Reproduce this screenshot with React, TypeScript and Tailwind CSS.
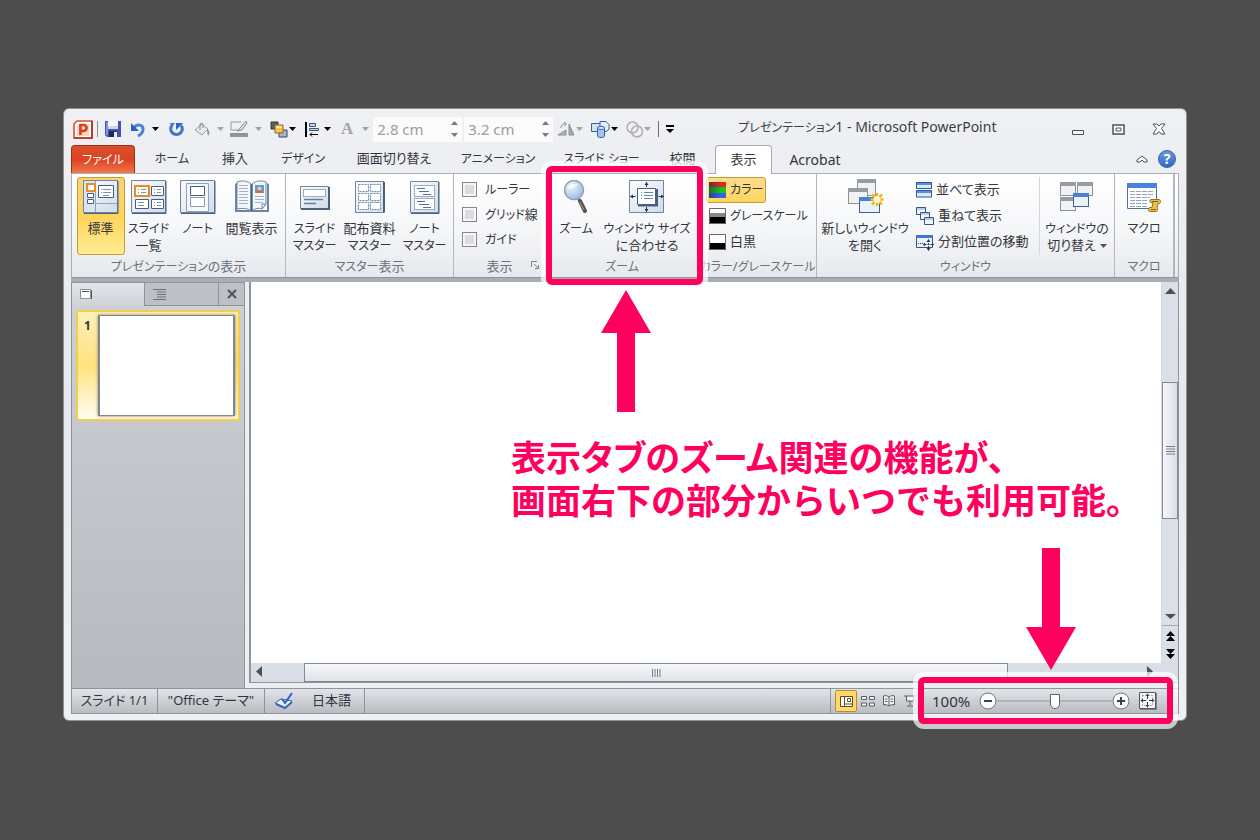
import type { ReactNode } from 'react'

const FONT = "font-['Noto_Sans','Noto_Sans_CJK_JP',sans-serif] [font-feature-settings:'palt']"

// katakana runs are set one step smaller than the kanji around them
function Text({ children }: { children: string }) {
  return (
    <span>
      {children.split(/([ァ-ヶー]+)/).map((part, i) =>
        i % 2 ? <span key={i} className="text-[12px]">{part}</span> : part,
      )}
    </span>
  )
}

function Caret({ className = '' }: { className?: string }) {
  return (
    <svg width="7" height="4" viewBox="0 0 7 4" fill="currentColor" className={className}>
      <path d="M0 0h7L3.5 4z" />
    </svg>
  )
}

/* ---------- quick access toolbar icons ---------- */

function PowerPointLogo() {
  return (
    <svg width="20" height="19" viewBox="0 0 20 19">
      <path d="M4 1h15v17H1V4z" fill="#fff" stroke="#d9532c" strokeWidth="1.6" />
      <path d="M4 6l2-2h10v12H4z" fill="#f8d3c4" />
      <path d="M19 1v17H1" fill="none" stroke="#b92d12" strokeWidth="1.6" />
      <path d="M7.4 15V5h3.2a2.9 2.9 0 0 1 0 6H7.6" fill="none" stroke="#d6401b" strokeWidth="2.6" />
    </svg>
  )
}

function SaveIcon() {
  return (
    <svg width="16" height="16" viewBox="0 0 16 16">
      <path d="M0 0h16v16H2l-2-2z" fill="#4a50b4" />
      <path d="M1 1h2v13H1z" fill="#8b90dd" />
      <path d="M3 0h10v8H3z" fill="#f3f6fc" />
      <path d="M3 5h10v3H3z" fill="#c7d7ee" />
      <path d="M4 10h8v6H4z" fill="#23265c" />
      <path d="M9 11h3v5H9z" fill="#e9edf6" />
    </svg>
  )
}

function UndoIcon() {
  return (
    <svg width="15" height="15" viewBox="0 0 15 15">
      <path d="M3 5.500c3-4 9.500-3 9 2-.2 3-2 5-5 6.500" fill="none" stroke="#4a80d6" strokeWidth="3" />
      <path d="M0 1v8h8z" fill="#2f63c0" />
    </svg>
  )
}

function RepeatIcon() {
  return (
    <svg width="15" height="15" viewBox="0 0 15 15">
      <path d="M3 3.500c-3 4 0 9 4.500 9s7.500-5 4.500-9" fill="none" stroke="#3f78d0" strokeWidth="3" />
      <path d="M7 1h7L7 8z" fill="#2f63c0" />
      <path d="M1 1h5L3 5z" fill="#3f78d0" />
    </svg>
  )
}

function FillIcon() {
  return (
    <svg width="17" height="15" viewBox="0 0 17 15">
      <path d="M1 8l7-6 6 5-6 6z" fill="#e7e8ea" stroke="#9a9c9f" />
      <path d="M6 8V2a2 2 0 0 1 3 0v4" fill="none" stroke="#8d8f92" />
      <path d="M13 6c2 2 3 5 2 7s-2-1-2-7z" fill="#939598" />
    </svg>
  )
}

function OutlineIcon() {
  return (
    <svg width="18" height="18" viewBox="0 0 18 18">
      <path d="M11 2H1v8h7" fill="none" stroke="#96989b" />
      <path d="M16 1l-6 7-3 3 5-1 5-7z" fill="#d9dadc" stroke="#8d8f92" />
      <path d="M0 13h18v4H0z" fill="#919396" />
    </svg>
  )
}

function ArrangeIcon() {
  return (
    <svg width="18" height="17" viewBox="0 0 18 17">
      <path d="M1 1h7v7H1z" fill="#5b5e63" stroke="#32353a" />
      <path d="M9 9h8v7H9z" fill="#a4b6cd" stroke="#3a4658" />
      <path d="M5 4h8v8H5z" fill="#f4c34e" stroke="#8b6d2b" />
      <path d="M6 5h6v2H6z" fill="#fbe29b" />
    </svg>
  )
}

function AlignIcon() {
  return (
    <svg width="15" height="15" viewBox="0 0 15 15">
      <path d="M1 0v15" stroke="#000" strokeWidth="2" />
      <path d="M4.500 1.500h6v3h-6zM4.500 6.500h9v2h-9z" fill="#c5d3e4" stroke="#3b5878" />
      <path d="M5 12.500h8M7 10.500l-2 2 2 2" fill="none" stroke="#000" />
    </svg>
  )
}

function RotateIcon() {
  return (
    <svg width="19" height="16" viewBox="0 0 19 16">
      <path d="M1 14l8-5v5z" fill="#b3b5b8" stroke="#8d8f92" />
      <path d="M12 3v11h5z" fill="#a5a7aa" stroke="#8d8f92" />
      <path d="M4 7c0-3 2-5 5-4M7 1l2.500 2L7 5" fill="none" stroke="#8d8f92" />
    </svg>
  )
}

function ShapesIcon() {
  return (
    <svg width="19" height="18" viewBox="0 0 19 18">
      <path d="M.5 3.500h10v8H.5z" fill="#cfe2f7" stroke="#2f65a6" />
      <path d="M9 1.500h6l3 3v5l-3 2H9z" fill="#e3eefa" stroke="#2f65a6" />
      <path d="M6.500 8c0-2 7-2 7 0v8c0 2-7 2-7 0z" fill="#a5c6ec" stroke="#2f65a6" />
      <ellipse cx="10" cy="8" rx="3.500" ry="1.500" fill="#eef5fc" stroke="#2f65a6" />
    </svg>
  )
}

function CirclesIcon() {
  return (
    <svg width="18" height="17" viewBox="0 0 18 17" fill="none" stroke="#b0aeb2" strokeWidth="1.500">
      <circle cx="6.500" cy="6.500" r="5.500" />
      <circle cx="11" cy="10.500" r="5.500" />
    </svg>
  )
}

/* ---------- large ribbon icons ---------- */

const EDGE = '#71859f'
const DARK = '#48607e'

function Sheet({ children }: { children: ReactNode }) {
  return (
    <svg width="36" height="34" viewBox="0 0 36 34">
      <defs>
        <linearGradient id="sheet" x1="0" y1="0" x2="1" y2="1">
          <stop offset="0" stopColor="#fafcfe" />
          <stop offset="1" stopColor="#cfdce9" />
        </linearGradient>
      </defs>
      {children}
    </svg>
  )
}

function NormalIcon() {
  return (
    <Sheet>
      <path d="M.5 .5h34v32H.5z" fill="url(#sheet)" stroke={EDGE} />
      <path d="M1 1h11v31H1z" fill="#dbe5f0" />
      <path d="M12.500 1v31M13 23.500h21" stroke="#8fa4bd" />
      <path d="M4 4h8v7H4z" fill="#fff" stroke="#ee8a22" strokeWidth="2" />
      <path d="M4.500 13.500h6v4h-6zM4.500 19.500h6v4h-6z" fill="#fff" stroke={DARK} />
      <path d="M15.500 5.500h15v12h-15z" fill="#fff" stroke={DARK} />
      <path d="M18 9.500h1M18 12.500h1M20 9.500h8M20 12.500h8M20 15.500h6" stroke="#7d93ad" />
      <path d="M35 1v32.500H1" fill="none" stroke={DARK} />
    </Sheet>
  )
}

function SorterIcon() {
  return (
    <Sheet>
      <path d="M.5 .5h34v32H.5z" fill="url(#sheet)" stroke={EDGE} />
      <path d="M20.500 6.500h12v9h-12zM4.500 19.500h13v9h-13zM20.500 19.500h12v9h-12z" fill="#fff" stroke={DARK} />
      <path d="M4 6h14v10H4z" fill="#fff" stroke="#ee8a22" strokeWidth="2" />
      <path d="M7 9.500h1M7 12.500h1M10 9.500h5M10 12.500h5M23 9.500h1M23 12.500h1M26 9.500h4M26 12.500h4M7 22.500h6M7 25.500h6M23 22.500h1M23 25.500h1M26 22.500h4M26 25.500h4" stroke="#7d93ad" />
      <path d="M35 1v32.500H1" fill="none" stroke={DARK} />
    </Sheet>
  )
}

function NotesIcon() {
  return (
    <Sheet>
      <path d="M.5 .5h34v32H.5z" fill="url(#sheet)" stroke={EDGE} />
      <path d="M6.500 3.500h22v28h-22z" fill="#f6f9fc" stroke="#90a2b8" />
      <path d="M10.500 6.500h14v9h-14z" fill="#fff" stroke={DARK} />
      <path d="M10.500 17.500h14v9h-14z" fill="#fff" stroke="#2b3f5b" strokeDasharray="1 1" />
      <path d="M35 1v32.500H1" fill="none" stroke={DARK} />
    </Sheet>
  )
}

function ReadingIcon() {
  return (
    <Sheet>
      <path d="M1 4l2-1v27h30V3l2 1v28H1z" fill="#6f86a3" />
      <path d="M3 2c5-2 11-1 14 2v27c-3-3-9-3-14-2z" fill="#f3f6fa" stroke={EDGE} />
      <path d="M32 2c-5-2-11-1-14 2v27c3-3 7-3 10-2l4-5z" fill="#f3f6fa" stroke={EDGE} />
      <path d="M17.500 4v27" stroke={DARK} strokeWidth="2" />
      <path d="M5 5.500h9M5 8.500h9M5 11.500h9M5 14.500h9M5 17.500h9M5 20.500h9M5 23.500h9M21 16.500h9M21 19.500h9M21 22.500h8" stroke="#a3b3c6" />
      <path d="M21 5h9v8h-9z" fill="#5a9fd8" />
      <path d="M22 13c0-4 7-4 7 0z" fill="#d8643a" />
      <circle cx="25.500" cy="8.500" r="2" fill="#f6c9a4" />
      <path d="M28 29v-5h4z" fill="#fff" stroke={EDGE} />
    </Sheet>
  )
}

function SlideMasterIcon() {
  return (
    <Sheet>
      <path d="M3.500 6.500h28v22h-28z" fill="url(#sheet)" stroke={EDGE} />
      <path d="M32 7v22H4" fill="none" stroke={DARK} strokeWidth="2" />
      <path d="M6.500 9.500h22v7h-22z" fill="#fff" stroke={DARK} strokeDasharray="1 1" />
      <path d="M7 19.500h19M7 23.500h12" stroke="#5f80a8" strokeWidth="1.500" />
    </Sheet>
  )
}

function HandoutMasterIcon() {
  return (
    <Sheet>
      <path d="M3.500 1.500h28v31h-28z" fill="url(#sheet)" stroke={EDGE} />
      <path d="M32 2v30.500" stroke={DARK} strokeWidth="2" />
      {[4, 13, 22].map((y) => (
        <g key={y} fill="#fff" stroke="#7189a6" strokeDasharray="2 1">
          <rect x="6.500" y={y + 0.5} width="10" height="7" />
          <rect x="18.500" y={y + 0.5} width="10" height="7" />
        </g>
      ))}
    </Sheet>
  )
}

function NotesMasterIcon() {
  return (
    <Sheet>
      <path d="M3.500 1.500h28v31h-28z" fill="url(#sheet)" stroke={EDGE} />
      <path d="M7.500 5.500h20v11h-20zM7.500 18.500h20v11h-20z" fill="#fff" stroke={DARK} strokeDasharray="1 1" />
      <path d="M10 8.500h8M12 11.500h10M16 14.500h8M10 21.500h8M12 24.500h10M16 27.500h8" stroke="#4f709a" />
      <path d="M32 2v31.500H4" fill="none" stroke={DARK} />
    </Sheet>
  )
}

function MagnifierIcon() {
  return (
    <svg width="36" height="34" viewBox="0 0 36 34">
      <defs>
        <radialGradient id="lens" cx="0.35" cy="0.3" r="0.8">
          <stop offset="0" stopColor="#f3f9ff" />
          <stop offset="1" stopColor="#8db7e4" />
        </radialGradient>
      </defs>
      <path d="M19 17l3 4" stroke="#84898f" strokeWidth="3" />
      <path d="M22 21l5 10" stroke="#57504f" strokeWidth="4" strokeLinecap="round" />
      <path d="M22 22l4 8" stroke="#a39c99" strokeWidth="1" />
      <circle cx="16" cy="10" r="9.500" fill="url(#lens)" stroke="#98a1ac" strokeWidth="1.500" />
      <path d="M10 8c2-4 7-5 10-3-3 1-6 5-10 3z" fill="#fff" opacity="0.7" />
    </svg>
  )
}

function FitIcon() {
  return (
    <Sheet>
      <path d="M.5 .5h34v32H.5z" fill="url(#sheet)" stroke={EDGE} />
      <path d="M8.500 8.500h18v16h-18z" fill="#fff" stroke={DARK} />
      <path d="M28 9v16.500H9" fill="none" stroke={DARK} strokeWidth="2" />
      <path d="M12 12.500h1M12 15.500h1M12 18.500h1M15 12.500h9M15 15.500h9M15 18.500h9" stroke="#6484ad" />
      <path d="M17.500 2v5M17.500 27v5M1.500 16.500h5M29.500 16.500h5" stroke="#26384f" />
      <path d="M15.500 5l2-3 2 3zM15.500 29l2 3 2-3zM4 14.500l-3 2 3 2zM32 14.500l3 2-3 2z" fill="#26384f" />
    </Sheet>
  )
}

function MiniWindow({ x, y, w, h, active }: { x: number; y: number; w: number; h: number; active?: boolean }) {
  return (
    <g>
      <rect x={x + 0.5} y={y + 0.5} width={w} height={h} fill={active ? '#eaf1fa' : '#f1f2f4'} stroke={active ? '#3b5f96' : '#8c9097'} />
      <rect x={x} y={y} width={w + 1} height="4" fill={active ? '#4a7fd6' : '#979ba2'} />
    </g>
  )
}

function NewWindowIcon() {
  return (
    <svg width="38" height="36" viewBox="0 0 38 36">
      <MiniWindow x={11} y={0} w={18} h={16} />
      <MiniWindow x={2} y={9} w={19} h={15} />
      <MiniWindow x={13} y={18} w={20} h={15} active />
      <path d="M31 14v13M24.500 20.500h13M26 15.500l10 10M36 15.500l-10 10" stroke="#f2b51f" strokeWidth="2.500" />
      <circle cx="31" cy="20.500" r="3.500" fill="#fffbd0" />
    </svg>
  )
}

function SwitchWindowIcon() {
  return (
    <svg width="36" height="32" viewBox="0 0 36 32">
      <MiniWindow x={1} y={1} w={15} h={13} />
      <MiniWindow x={18} y={1} w={15} h={13} />
      <MiniWindow x={1} y={16} w={15} h={13} />
      <MiniWindow x={14} y={12} w={15} h={13} active />
    </svg>
  )
}

function MacroIcon() {
  return (
    <svg width="34" height="32" viewBox="0 0 34 32">
      <path d="M.5 2.500h29v25H.5z" fill="#fff" stroke="#4f7099" />
      <path d="M0 2h30v5H0z" fill="#4a80de" />
      <path d="M3 10.500h24M3 13.500h24M3 16.500h20M3 19.500h18M3 22.500h18M3 25.500h18" stroke="#8fa5c2" strokeDasharray="5 1" />
      <path d="M24 18.500h8c2 0 2 4 0 4h-1l-1 4c1 0 1 4-1 4h-6c-2 0-2-4 0-4h2l1-5h-2c-1.500 0-1.500-3 0-3z" fill="#eac04a" stroke="#99701c" />
      <path d="M25 20.500h6M24 28.500h5" stroke="#8a6418" />
    </svg>
  )
}

/* ---------- ribbon pieces ---------- */

function BigButton({ icon, lines, active, caret, className = '' }: { icon: ReactNode; lines: string[]; active?: boolean; caret?: boolean; className?: string }) {
  return (
    <button
      type="button"
      className={`flex h-[78px] shrink-0 flex-col items-center rounded-[3px] border pt-px ${
        active ? 'border-[#c69a37] bg-linear-to-b from-[#fbd374] via-[#ffd457] to-[#ffec92]' : 'border-transparent'
      } ${className}`}
    >
      <span className="flex h-9 items-center justify-center">{icon}</span>
      <span className="mt-[5px] flex flex-col text-[13px] leading-[17px] whitespace-nowrap">
        {lines.map((line, i) => (
          <span key={line} className="flex items-center justify-center gap-1">
            <Text>{line}</Text>
            {caret && i === lines.length - 1 && <Caret className="text-[#555]" />}
          </span>
        ))}
      </span>
    </button>
  )
}

function SmallButton({ icon, label, active }: { icon: ReactNode; label: string; active?: boolean }) {
  return (
    <button
      type="button"
      className={`flex h-[26px] w-fit items-center gap-1 rounded-[3px] border px-[2px] text-[13px] whitespace-nowrap ${
        active ? 'border-[#c69a37] bg-linear-to-b from-[#fcdc8c] to-[#ffd55c]' : 'border-transparent'
      }`}
    >
      {icon}
      <Text>{label}</Text>
    </button>
  )
}

function Group({ title, width, children, last, launcher }: { title: string; width: string; children: ReactNode; last?: boolean; launcher?: boolean }) {
  return (
    <section className={`relative flex shrink-0 flex-col border-r border-[#b3b7bd] ${last ? 'border-r-2' : ''} ${width}`}>
      <div className="flex h-[82px] items-start justify-center pt-[3px]">{children}</div>
      <h2 className="flex-1 text-center text-[13px] leading-[20px] whitespace-nowrap text-[#6b7079]"><Text>{title}</Text></h2>
      {launcher && (
        <svg width="8" height="8" viewBox="0 0 8 8" className="absolute right-[6px] bottom-2" fill="none" stroke="#83878d">
          <path d="M.5 6V.5H6M3 3l4 4M7.500 4v3.500H4" />
        </svg>
      )}
    </section>
  )
}

function Frame({ className }: { className: string }) {
  return <div className={`pointer-events-none absolute z-20 rounded-md border-[6px] border-[#ff005e] ring-[5px] ring-white/70 ${className}`} />
}

function Arrow({ className }: { className: string }) {
  return (
    <svg width="50" height="122" viewBox="0 0 50 122" fill="#ff005e" className={`absolute z-20 ${className}`}>
      <path d="M25 0l25 43H34v79H16V43H0z" />
    </svg>
  )
}

const tabs = [
  { label: 'ホーム', width: 'w-[74px]' },
  { label: '挿入', width: 'w-[52px]' },
  { label: 'デザイン', width: 'w-[84px]' },
  { label: '画面切り替え', width: 'w-[98px]' },
  { label: 'アニメーション', width: 'w-[110px]' },
  { label: 'スライド ショー', width: 'w-[97px]' },
  { label: '校閲', width: 'w-[65px]' },
]

function SizeBox({ label, value }: { label: string; value: string }) {
  return (
    <div className="flex h-[25px] w-[89px] items-center bg-[#fbfbfc] px-1">
      <input aria-label={label} defaultValue={value} className="w-0 flex-1 bg-transparent text-[15px] text-[#9b9da0] outline-none" />
      <svg width="7" height="16" viewBox="0 0 7 16" fill="#777a7e">
        <path d="M0 4h7L3.500 0zM0 12h7l-3.500 4z" />
      </svg>
    </div>
  )
}

function TitleBar() {
  return (
    <header className="flex h-8 items-center pl-[2px] text-black">
      <PowerPointLogo />
      <div className="mr-[7px] ml-1 h-4 w-px bg-[#8c9096]" />
      <button type="button" aria-label="保存"><SaveIcon /></button>
      <button type="button" aria-label="元に戻す" className="ml-[10px] flex items-center gap-[6px]"><UndoIcon /><Caret /></button>
      <button type="button" aria-label="繰り返し" className="ml-[10px]"><RepeatIcon /></button>
      <button type="button" aria-label="塗りつぶし" className="ml-[10px] flex items-center gap-[6px] text-[#a1a3a6]"><FillIcon /><Caret /></button>
      <button type="button" aria-label="枠線" className="ml-[6px] flex items-center gap-[7px] text-[#a1a3a6]"><OutlineIcon /><Caret /></button>
      <button type="button" aria-label="配置" className="ml-2 flex items-center gap-px"><ArrangeIcon /><Caret /></button>
      <button type="button" aria-label="配置揃え" className="ml-[9px] flex items-center gap-1"><AlignIcon /><Caret /></button>
      <button type="button" aria-label="文字" className="ml-[10px] flex items-center gap-[9px] font-['Liberation_Serif',serif] text-[17px] font-bold text-[#a1a3a6]">A<Caret /></button>
      <div className="ml-1 flex gap-[2px]">
        <SizeBox label="高さ" value="2.8 cm" />
        <SizeBox label="幅" value="3.2 cm" />
      </div>
      <button type="button" aria-label="回転" className="ml-1 flex items-center text-[#a1a3a6]"><RotateIcon /><Caret /></button>
      <button type="button" aria-label="図形" className="ml-2 flex items-center gap-px"><ShapesIcon /><Caret /></button>
      <button type="button" aria-label="結合" className="ml-2 flex items-center text-[#a1a3a6]"><CirclesIcon /><Caret /></button>
      <div className="mx-[7px] h-4 w-px bg-[#6c7076]" />
      <svg width="8" height="8" viewBox="0 0 8 8"><path d="M0 0h8v2H0zM0 4h8L4 8z" /></svg>
      <h1 className="mb-[6px] ml-16 flex-1 text-[14px] whitespace-nowrap text-[#3b3e44]"><Text>プレゼンテーション1  -  Microsoft PowerPoint</Text></h1>
      <div className="flex items-center gap-[27px] pr-[13px]">
        <button type="button" aria-label="最小化"><svg width="13" height="14" viewBox="0 0 13 14"><path d="M.5 8.500h11v4H.5z" fill="#fff" stroke="#4b5058" /></svg></button>
        <button type="button" aria-label="元のサイズに戻す">
          <svg width="13" height="11" viewBox="0 0 13 11"><path d="M1 1h11v9H1z" fill="#fff" stroke="#4b5058" strokeWidth="1.500" /><path d="M4 4h5v3H4z" fill="none" stroke="#4b5058" /></svg>
        </button>
        <button type="button" aria-label="閉じる">
          <svg width="14" height="12" viewBox="0 0 14 12"><path d="M1 1h4l2 2 2-2h4L9.500 5.500 13 11H9L7 8.500 5 11H1l3.500-5.500z" fill="#fff" stroke="#4b5058" /></svg>
        </button>
      </div>
    </header>
  )
}

function TabBar() {
  return (
    <nav className="flex h-7 items-end text-[13px] text-[#33363b]">
      <button type="button" className="h-7 w-16 rounded-t-[4px] border border-b-0 border-[#a92c0e] bg-linear-to-b from-[#d9512c] via-[#dc4122] to-[#f0764a] text-white"><Text>ファイル</Text></button>
      {tabs.map((t) => (
        <button type="button" key={t.label} className={`h-7 shrink-0 whitespace-nowrap ${t.width}`}><Text>{t.label}</Text></button>
      ))}
      <button type="button" className="relative z-10 -mb-px h-[29px] w-[57px] rounded-t-[4px] border border-b-0 border-[#a5aab2] bg-white">表示</button>
      <button type="button" className="h-7 w-[86px] text-[14px]">Acrobat</button>
      <div className="ml-auto flex h-7 items-center gap-[10px] pr-[3px]">
        <button type="button" aria-label="リボンの最小化">
          <svg width="12" height="8" viewBox="0 0 12 8"><path d="M1 5l5-4 5 4v2H8L6 5 4 7H1z" fill="#fff" stroke="#4b5058" /></svg>
        </button>
        <button type="button" aria-label="ヘルプ" className="h-[18px] w-[18px] rounded-full border border-[#2f5fae] bg-linear-to-b from-[#6c9ae0] to-[#3469bf] text-[14px] leading-[16px] font-bold text-white">?</button>
      </div>
    </nav>
  )
}

function ToneIcon({ mid, low }: { mid: string; low: string }) {
  return (
    <svg width="17" height="16" viewBox="0 0 17 16">
      <path d="M0 0h17v16H0z" fill="#fff" />
      <path d="M0 5h17v5H0z" fill={mid} />
      <path d="M0 9h17v7H0z" fill={low} />
      <path d="M.5 .5h16v15H.5z" fill="none" stroke="#65686d" />
    </svg>
  )
}

function ColorIcon() {
  return (
    <svg width="17" height="16" viewBox="0 0 17 16">
      <defs>
        <linearGradient id="shade">
          <stop offset="0" stopColor="#1d3344" stopOpacity="0.6" />
          <stop offset="0.7" stopColor="#1d3344" stopOpacity="0" />
        </linearGradient>
      </defs>
      <path d="M0 0h17v5H0z" fill="#d92a20" />
      <path d="M0 5h17v6H0z" fill="#18c41e" />
      <path d="M0 11h17v5H0z" fill="#2f66f0" />
      <path d="M0 0h17v16H0z" fill="url(#shade)" />
    </svg>
  )
}

function StackIcon() {
  return (
    <svg width="16" height="16" viewBox="0 0 16 16">
      <path d="M.5 .5h15v6H.5zM.5 8.500h15v6.500H.5z" fill="#dfeafa" stroke="#2f5596" />
      <path d="M1 1h14v2H1zM1 9h14v2H1z" fill="#5b8ee6" />
    </svg>
  )
}

function CascadeIcon() {
  return (
    <svg width="18" height="18" viewBox="0 0 18 18" fill="#f3f7fd" stroke="#3c5478">
      <path d="M.5 .5h9v7h-9z" />
      <path d="M4.500 5.500h9v7h-9z" />
      <path d="M8.500 10.500h9v7h-9z" />
      <path d="M1 2h8M5 7h8M9 12h8" stroke="#7ba3e6" strokeWidth="1" />
    </svg>
  )
}

function SplitIcon() {
  return (
    <svg width="18" height="17" viewBox="0 0 18 17">
      <path d="M.5 1.500h16v12H.5z" fill="#eaf1fb" stroke="#3c5478" />
      <path d="M0 1h17v3H0z" fill="#3f76d6" />
      <path d="M2 9.500h6" stroke="#26384f" strokeDasharray="1 1" />
      <path d="M12.500 6v10M8.500 10.500h9" stroke="#26384f" strokeDasharray="2 1" />
      <path d="M10.500 8l2-3 2 3zM10.500 14l2 3 2-3zM9 8.500l-2 2 2 2zM16 8.500l2 2-2 2z" fill="#26384f" />
    </svg>
  )
}

function Ribbon() {
  return (
    <div className="relative flex h-[105px] border border-[#a9adb4] border-b-[#8f949b] bg-linear-to-b from-white via-[#f6f7f9] to-[#e6e9ed] text-[#33363b]">
      <Group title="プレゼンテーションの表示" width="w-[214px]">
        <BigButton icon={<NormalIcon />} lines={['標準']} active className="w-12" />
        <BigButton icon={<SorterIcon />} lines={['スライド', '一覧']} className="w-12" />
        <BigButton icon={<NotesIcon />} lines={['ノート']} className="w-[50px]" />
        <BigButton icon={<ReadingIcon />} lines={['閲覧表示']} className="w-[58px]" />
      </Group>
      <Group title="マスター表示" width="w-[168px]">
        <BigButton icon={<SlideMasterIcon />} lines={['スライド', 'マスター']} className="w-[54px]" />
        <BigButton icon={<HandoutMasterIcon />} lines={['配布資料', 'マスター']} className="w-[56px]" />
        <BigButton icon={<NotesMasterIcon />} lines={['ノート', 'マスター']} className="w-[54px]" />
      </Group>
      <Group title="表示" width="w-[92px]" launcher>
        <div className="flex flex-1 flex-col pl-2">
          {['ルーラー', 'グリッド線', 'ガイド'].map((label) => (
            <label key={label} className="flex h-[25px] items-center gap-2 text-[13px] whitespace-nowrap">
              <input type="checkbox" className="h-[15px] w-[15px] shrink-0 appearance-none border border-[#85888d] bg-[#dadcdf] shadow-[inset_0_0_0_2px_#f6f6f7]" />
              <Text>{label}</Text>
            </label>
          ))}
        </div>
      </Group>
      <Group title="ズーム" width="w-[153px]">
        <BigButton icon={<MagnifierIcon />} lines={['ズーム']} className="w-[50px]" />
        <BigButton icon={<FitIcon />} lines={['ウィンドウ サイズ', 'に合わせる']} className="w-[92px]" />
        <Frame className="left-0 -right-[5px] -top-[8px] -bottom-[8px]" />
        <Arrow className="top-[116px] left-[55px]" />
      </Group>
      <Group title="カラー/グレースケール" width="w-[118px]">
        <div className="flex flex-1 flex-col pl-[7px]">
          <SmallButton icon={<ColorIcon />} label="カラー" active />
          <SmallButton icon={<ToneIcon mid="#85878a" low="#000" />} label="グレースケール" />
          <SmallButton icon={<ToneIcon mid="#fff" low="#000" />} label="白黒" />
        </div>
      </Group>
      <Group title="ウィンドウ" width="w-[298px]">
        <BigButton icon={<NewWindowIcon />} lines={['新しいウィンドウ', 'を開く']} className="w-[96px]" />
        <div className="flex w-[126px] flex-col">
          <SmallButton icon={<StackIcon />} label="並べて表示" />
          <SmallButton icon={<CascadeIcon />} label="重ねて表示" />
          <SmallButton icon={<SplitIcon />} label="分割位置の移動" />
        </div>
        <div className="h-[78px] w-px bg-[#d3d6da]" />
        <BigButton icon={<SwitchWindowIcon />} lines={['ウィンドウの', '切り替え']} caret className="w-[74px]" />
      </Group>
      <Group title="マクロ" width="w-[60px]" last>
        <BigButton icon={<MacroIcon />} lines={['マクロ']} className="w-[52px]" />
      </Group>
    </div>
  )
}

function SlidePane() {
  return (
    <aside className="flex w-[174px] shrink-0 flex-col border-x border-[#8f949b] bg-linear-to-b from-[#ced2d7] to-[#b6b9be]">
      <div className="flex h-6 shrink-0 border-t border-[#8f949b]">
        <button type="button" aria-label="スライド" className="w-[72px] bg-linear-to-b from-[#e2e5e9] to-[#cfd3d8] pl-2">
          <svg width="13" height="11" viewBox="0 0 13 11"><path d="M.5 .5h10v9H.5z" fill="#fff" stroke="#8c8f93" /><path d="M11.500 1v9M2 2.500h7" stroke="#55585c" /></svg>
        </button>
        <button type="button" aria-label="アウトライン" className="w-[74px] border-b border-l border-[#8f949b] bg-[#bdc1c6] pl-2">
          <svg width="13" height="11" viewBox="0 0 13 11" stroke="#6c7074"><path d="M0 .5h13M4 3h9M4 5.500h9M4 8h9M0 10.500h13" /></svg>
        </button>
        <button type="button" aria-label="閉じる" className="flex flex-1 items-center justify-center border-b border-l border-[#8f949b] bg-[#bdc1c6]">
          <svg width="10" height="10" viewBox="0 0 10 10" stroke="#4f5256" strokeWidth="2"><path d="M1 1l8 8M9 1L1 9" /></svg>
        </button>
      </div>
      <button type="button" className="mx-1 mt-1 flex h-[111px] rounded-[3px] border-2 border-[#f4cd4c] bg-linear-to-b from-[#fdf0b9] via-[#ffe27c] to-[#fffdf0] py-[3px] pr-[3px] pl-[6px] text-left">
        <span className="w-[14px] pt-[2px] text-[12px] font-bold text-[#333]">1</span>
        <span className="h-full flex-1 border border-x-2 border-[#7e8790] bg-white shadow-[0_0_3px_#8b8255]" />
      </button>
    </aside>
  )
}

function Workspace() {
  return (
    <main className="relative flex min-w-0 flex-1 flex-col border-l-2 border-[#8f959c] bg-white">
      <div className="flex min-h-0 flex-1">
        <div className="relative flex-1">
          <p className="absolute top-[154px] left-[260px] z-20 text-[35px] leading-[43px] font-bold whitespace-nowrap text-[#ff005e] [font-feature-settings:normal]">
            表示<span className="[font-feature-settings:'palt']">タブのズーム</span>関連の機能が、<br />画面右下の部分からいつでも利用可能。
          </p>
        </div>
        <div className="flex w-[17px] flex-col items-center border-l border-[#d5d9df] bg-[#dbe0e8] text-[#4c5057]">
          <svg width="11" height="18" viewBox="0 0 11 18" fill="currentColor"><path d="M0 12h11L5.500 6z" /></svg>
          <div className="mt-[82px] flex h-[137px] w-full items-center justify-center border border-[#858b94] bg-linear-to-r from-[#f7f8fa] to-[#d9dde3]">
            <svg width="9" height="9" viewBox="0 0 9 9" stroke="#7a7f86"><path d="M0 .5h9M0 3h9M0 5.500h9M0 8h9" /></svg>
          </div>
          <svg width="11" height="16" viewBox="0 0 11 16" fill="currentColor" className="mt-auto"><path d="M0 5h11l-5.500 5z" /></svg>
          <div className="flex h-[38px] w-full items-center justify-center border-t border-[#a3a8b0]">
            <svg width="9" height="28" viewBox="0 0 9 28"><path d="M0 5l4.500-5L9 5zM0 10l4.500-5L9 10zM0 18h9l-4.500 5zM0 23h9l-4.500 5z" /></svg>
          </div>
        </div>
      </div>
      <div className="flex h-5 items-stretch border-b border-[#8f959c] bg-[#d9dde5] text-[#4c5057]">
        <svg width="53" height="18" viewBox="0 0 53 18" fill="currentColor"><path d="M11 3v11L5 8.500z" /></svg>
        <div className="flex w-[704px] items-center justify-center border border-[#858b94] bg-linear-to-b from-[#f5f7f9] to-[#dfe3e8]">
          <svg width="9" height="8" viewBox="0 0 9 8" stroke="#7a7f86"><path d="M.5 0v8M3 0v8M5.500 0v8M8 0v8" /></svg>
        </div>
        <svg width="8" height="18" viewBox="0 0 8 18" fill="currentColor" className="mr-6 ml-auto"><path d="M1 3v11l6-5.500z" /></svg>
      </div>
    </main>
  )
}

function StatusBar() {
  return (
    <footer className="relative flex h-[26px] shrink-0 items-center border border-[#8f949b] bg-linear-to-b from-[#e1e4e8] to-[#b9bdc3] text-[13px] text-[#33363b]">
      <span className="flex h-full w-[86px] items-center justify-center border-r border-[#8f949b]">スライド 1/1</span>
      <span className="flex h-full w-[107px] items-center justify-center border-r border-[#8f949b]">"Office テーマ"</span>
      <span className="flex h-full w-[100px] items-center gap-[18px] border-r border-[#8f949b] pl-[9px]">
        <svg width="20" height="18" viewBox="0 0 20 18">
          <path d="M1 11l6-4 11 2-7 7z" fill="#eaf0fa" stroke="#3f66b2" />
          <path d="M2 12l9 4 7-6" fill="none" stroke="#3f66b2" strokeWidth="2" />
          <path d="M8 7l3 4 7-10" fill="none" stroke="#2e62c9" strokeWidth="2" />
        </svg>
        日本語
      </span>
      <div className="ml-auto flex h-full items-center border-l border-[#8f949b] pr-5 pl-1">
        <button type="button" aria-label="標準" className="flex h-[22px] w-[22px] items-center justify-center rounded-[2px] border border-[#bd8d25] bg-[#ffd968]">
          <svg width="13" height="11" viewBox="0 0 13 11" fill="#fff" stroke="#5c4a20"><path d="M.5 .5h12v10H.5zM4.500 .5v10M7.500 2.500h3v3h-3zM4.500 8h8" /></svg>
        </button>
        <button type="button" aria-label="スライド一覧" className="ml-1">
          <svg width="14" height="11" viewBox="0 0 14 11" fill="#f4f5f6" stroke="#5b5f65"><path d="M.5 .5h5v3h-5zM8.500 .5h5v3h-5zM.5 7h5v3h-5zM8.500 7h5v3h-5z" /></svg>
        </button>
        <button type="button" aria-label="閲覧表示" className="ml-2">
          <svg width="12" height="12" viewBox="0 0 12 12" fill="#f4f5f6" stroke="#5b5f65"><path d="M.5 1c2-1 4 0 5.500 1 1.500-1 3.500-2 5.500-1v9c-2-1-4 0-5.500 1-1.500-1-3.500-2-5.500-1zM6 2v9M2 4h2.500M2 6.500h2.500M7.500 4H10M7.500 6.500H10" /></svg>
        </button>
        <button type="button" aria-label="スライド ショー" className="ml-[9px]">
          <svg width="12" height="12" viewBox="0 0 12 12" fill="#f4f5f6" stroke="#5b5f65"><path d="M0 1h12M2.500 1v5h7V1M6 6v4M3 11h6" /></svg>
        </button>
        <span className="ml-4 w-[40px] text-[15px]">100%</span>
        <button type="button" aria-label="縮小" className="ml-[7px]">
          <svg width="18" height="18" viewBox="0 0 18 18"><circle cx="9" cy="9" r="8" fill="#fafafb" stroke="#72777e" /><path d="M5 9h8" stroke="#3f4349" strokeWidth="2" /></svg>
        </button>
        <input type="range" aria-label="ズーム" min="0" max="100" defaultValue="50" className="h-4 w-[115px] appearance-none bg-linear-to-b from-transparent from-45% via-[#7f858d] via-50% to-transparent to-55% [&::-webkit-slider-thumb]:h-[15px] [&::-webkit-slider-thumb]:w-[10px] [&::-webkit-slider-thumb]:appearance-none [&::-webkit-slider-thumb]:rounded-b-[5px] [&::-webkit-slider-thumb]:border [&::-webkit-slider-thumb]:border-[#5f646b] [&::-webkit-slider-thumb]:bg-white" />
        <button type="button" aria-label="拡大">
          <svg width="18" height="18" viewBox="0 0 18 18"><circle cx="9" cy="9" r="8" fill="#fafafb" stroke="#72777e" /><path d="M5 9h8M9 5v8" stroke="#3f4349" strokeWidth="2" /></svg>
        </button>
        <button type="button" aria-label="ウィンドウ サイズに合わせる" className="ml-[9px]">
          <svg width="19" height="19" viewBox="0 0 19 19">
            <path d="M1 1h17v17H1z" fill="#7d8085" />
            <path d="M.5 .5h16v16H.5z" fill="#f3f4f5" stroke="#55595f" />
            <path d="M8.500 3v4M8.500 10v4M3 8.500h4M10 8.500h4" stroke="#33373c" />
            <path d="M6.500 4l2-2.500 2 2.500zM6.500 13l2 2.500 2-2.500zM4 6.500l-2.500 2 2.500 2zM13 6.500l2.500 2-2.500 2z" fill="#33373c" />
            <path d="M3.500 3.500h10v10h-10z" fill="none" stroke="#6c7076" strokeDasharray="1 2" />
          </svg>
        </button>
      </div>
      <Frame className="right-[5px] -bottom-[11px] h-[47px] w-[255px]" />
      <Arrow className="right-[102px] bottom-[43px] rotate-180" />
    </footer>
  )
}

export default function App() {
  return (
    <div className={`flex min-h-screen flex-col bg-[#4d4d4d] pt-[108px] pr-[73px] pb-[119px] pl-[63px] ${FONT}`}>
      <div className="flex flex-1 flex-col rounded-[6px] border border-[#8d9299] bg-linear-to-b from-[#eef0f3] via-[#e6e9ed] to-[#eef0f4] px-[7px] pt-1 pb-[6px] [&_button]:cursor-default">
        <TitleBar />
        <TabBar />
        <Ribbon />
        <div className="h-1 bg-[#a9adb5]" />
        <div className="flex min-h-[400px] flex-1">
          <SlidePane />
          <div className="flex min-w-0 flex-1 flex-col border-r border-[#8f949b] bg-[#eceef1] pb-[5px] pl-1">
            <Workspace />
          </div>
        </div>
        <StatusBar />
      </div>
    </div>
  )
}
